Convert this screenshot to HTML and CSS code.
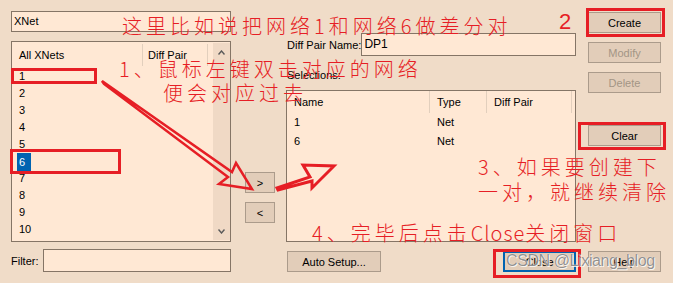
FILE: index.html
```html
<!DOCTYPE html>
<html lang="zh-CN">
<head>
    <meta charset="UTF-8">
    <title>Diff Pair</title>
    <link rel="stylesheet" href="styles.css">
</head>
<body>
    <div class="dialog">
        <div class="col-left">
            <div class="field xnet">XNet</div>
            <div class="listbox nets">
                <div class="list-main">
                    <div class="list-head">
                        <span class="hc hc-all">All XNets</span>
                        <span class="hc hc-pair">Diff Pair</span>
                    </div>
                    <div class="row">1</div>
                    <div class="row">2</div>
                    <div class="row">3</div>
                    <div class="row">4</div>
                    <div class="row">5</div>
                    <div class="row"><span class="sel">6</span></div>
                    <div class="row">7</div>
                    <div class="row">8</div>
                    <div class="row">9</div>
                    <div class="row">10</div>
                </div>
                <div class="scrollbar">
                    <svg width="7" height="5" viewBox="0 0 7 5"><polyline points="0.5,4.5 3.5,1 6.5,4.5" fill="none" stroke="#5a5a5a" stroke-width="1.4"/></svg>
                    <svg width="7" height="5" viewBox="0 0 7 5"><polyline points="0.5,0.5 3.5,4 6.5,0.5" fill="none" stroke="#5a5a5a" stroke-width="1.4"/></svg>
                </div>
            </div>
            <div class="filter-row">
                <span class="label">Filter:</span>
                <div class="field filter"></div>
            </div>
        </div>

        <div class="col-mid">
            <button class="btn small">&gt;</button>
            <button class="btn small">&lt;</button>
        </div>

        <div class="col-right">
            <div class="name-row">
                <span class="label">Diff Pair Name:</span>
                <div class="field pair-name">DP1</div>
            </div>
            <div class="label sel-label">Selections:</div>
            <div class="listbox selections">
                <div class="sel-grid sel-head">
                    <span>Name</span>
                    <span>Type</span>
                    <span>Diff Pair</span>
                </div>
                <div class="sel-grid sel-row">
                    <span>1</span>
                    <span>Net</span>
                    <span></span>
                </div>
                <div class="sel-grid sel-row">
                    <span>6</span>
                    <span>Net</span>
                    <span></span>
                </div>
            </div>
            <div class="bottom-row">
                <button class="btn auto">Auto Setup...</button>
                <button class="btn close">Close</button>
            </div>
        </div>

        <div class="col-buttons">
            <button class="btn">Create</button>
            <button class="btn" disabled>Modify</button>
            <button class="btn" disabled>Delete</button>
            <button class="btn clear">Clear</button>
            <button class="btn help">Help</button>
        </div>
    </div>

    <!-- red notes drawn over the dialog -->
    <div class="box box-one"></div>
    <div class="box box-six"></div>
    <div class="box box-create"></div>
    <div class="box box-clear"></div>
    <div class="box box-close"></div>

    <svg class="arrows" width="673" height="283" viewBox="0 0 673 283">
        <polygon points="102,81 232,172 236,163 252,189 219,184 228,177 104,84" fill="none" stroke="#e61e25" stroke-width="2.5" stroke-linejoin="miter"/>
        <polygon points="277,188 310,177 303,165 334,166 312,188 312,181 278,190" fill="none" stroke="#e61e25" stroke-width="3" stroke-linejoin="miter"/>
    </svg>

    <div class="note note-top">这里比如说把网络1和网络6做差分对</div>
    <div class="note-num">2</div>
    <div class="note note-one">1、鼠标左键双击对应的网络</div>
    <div class="note note-one-b">便会对应过去</div>
    <div class="note note-three">3、如果要创建下</div>
    <div class="note note-three-b">一对，就继续清除</div>
    <div class="note note-four">4、完毕后点击<span class="latin">Close</span>关闭窗口</div>

    <div class="watermark">CSDN @Lixiang_blog</div>
</body>
</html>
```

FILE: styles.css
```css
body {
    margin: 0;
    width: 673px;
    height: 283px;
    overflow: hidden;
    position: relative;
    background: #f0dcc8;
    font-family: "Liberation Sans", Arial, sans-serif;
    font-size: 11px;
    color: #000;
}

.dialog {
    display: grid;
    grid-template-columns: 221px 30px 290px 73px;
    column-gap: 12px;
    padding: 11px 0 11px 11px;
    height: 283px;
    box-sizing: border-box;
}

.label {
    white-space: nowrap;
}

.field {
    background: #ffe8d4;
    border: 1px solid #857566;
    box-sizing: border-box;
    padding-left: 2px;
}

/* left column */
.col-left {
    display: flex;
    flex-direction: column;
    width: 220px;
}

.xnet {
    height: 21px;
    line-height: 19px;
}

.listbox {
    background: #ffe8d4;
    border: 1px solid #857566;
    box-sizing: border-box;
}

.nets {
    margin-top: 9px;
    height: 201px;
    display: flex;
}

.list-main {
    flex: 1;
}

.list-head {
    height: 26px;
    display: flex;
    align-items: center;
}

.hc {
    height: 22px;
    line-height: 22px;
    box-sizing: border-box;
}

.hc-all {
    width: 131px;
    padding-left: 7px;
    border-right: 1px solid #e2cfbd;
}

.hc-pair {
    width: 65px;
    padding-left: 5px;
    border-right: 1px solid #e2cfbd;
}

.row {
    height: 17px;
    line-height: 17px;
    padding-left: 7px;
}

.sel {
    display: inline-block;
    margin-left: -2px;
    padding: 0 6px 0 2px;
    line-height: 18px;
    background: #0063b1;
    color: #fff;
}

.scrollbar {
    width: 17px;
    margin: 1px 0;
    background: #f0d9c5;
    display: flex;
    flex-direction: column;
    justify-content: space-between;
    align-items: center;
    padding: 7px 0 6px;
    box-sizing: border-box;
}

.filter-row {
    margin-top: 7px;
    display: flex;
    align-items: center;
}

.filter {
    margin-left: auto;
    width: 188px;
    height: 23px;
}

/* middle arrows */
.col-mid {
    display: flex;
    flex-direction: column;
    gap: 9px;
    padding-top: 161px;
    margin-left: 1px;
}

.btn {
    height: 21px;
    padding: 0;
    background: #e2cdb9;
    border: 1px solid #ab9b8b;
    box-sizing: border-box;
    font-family: inherit;
    font-size: 11px;
    color: #000;
}

.btn:disabled {
    color: #a39585;
}

.small {
    width: 30px;
}

/* right column */
.col-right {
    display: flex;
    flex-direction: column;
}

.name-row {
    margin-top: 22px;
    display: flex;
    align-items: center;
    padding-left: 1px;
}

.pair-name {
    margin-left: auto;
    width: 216px;
    height: 23px;
    line-height: 21px;
    font-size: 12px;
}

.sel-label {
    margin-top: 12px;
    line-height: 14px;
    padding-left: 1px;
}

.selections {
    margin-top: 8px;
    height: 152px;
}

.sel-grid {
    display: grid;
    grid-template-columns: 143px 57px 85px;
}

.sel-head {
    height: 22px;
    align-items: center;
}

.sel-head span {
    line-height: 22px;
    border-right: 1px solid #e2cfbd;
}

.sel-grid span {
    padding-left: 7px;
}

.sel-row {
    height: 19px;
    line-height: 19px;
}

.bottom-row {
    margin-top: auto;
    display: flex;
    justify-content: space-between;
}

.auto {
    width: 94px;
    margin-left: 1px;
}

.close {
    width: 73px;
    border: 2px solid #0063b1;
}

/* right buttons */
.col-buttons {
    display: flex;
    flex-direction: column;
    gap: 9px;
    padding-top: 1px;
}

.clear {
    margin-top: 23px;
}

.help {
    margin-top: auto;
}

/* annotations */
.box {
    position: absolute;
    border: 3px solid #e61e25;
    box-sizing: border-box;
}

.box-one { left: 11px; top: 68px; width: 86px; height: 16px; }
.box-six { left: 10px; top: 149px; width: 111px; height: 25px; }
.box-create { left: 586px; top: 8px; width: 79px; height: 29px; }
.box-clear { left: 578px; top: 122px; width: 88px; height: 28px; }
.box-close { left: 493px; top: 249px; width: 88px; height: 29px; }

.arrows {
    position: absolute;
    left: 0;
    top: 0;
}

.note {
    position: absolute;
    font-family: "Noto Sans CJK SC", sans-serif;
    font-weight: 300;
    font-size: 20px;
    line-height: 24px;
    letter-spacing: 4px;
    color: #e61e25;
    white-space: nowrap;
}

.note .latin {
    letter-spacing: 1px;
}

.note-top { left: 122px; top: 14px; }
.note-one { left: 119px; top: 57px; }
.note-one-b { left: 163px; top: 81px; }
.note-three { left: 478px; top: 155px; }
.note-three-b { left: 478px; top: 180px; }
.note-four { left: 312px; top: 221px; }

.note-num {
    position: absolute;
    left: 559px;
    top: 9px;
    font-size: 22px;
    color: #e61e25;
}

.watermark {
    position: absolute;
    left: 506px;
    top: 252px;
    font-size: 16px;
    letter-spacing: -0.4px;
    color: rgba(110, 110, 110, 0.75);
    text-shadow: 0 0 1px #fff, 1px 1px 0 rgba(255, 255, 255, 0.8);
    white-space: nowrap;
}
```
